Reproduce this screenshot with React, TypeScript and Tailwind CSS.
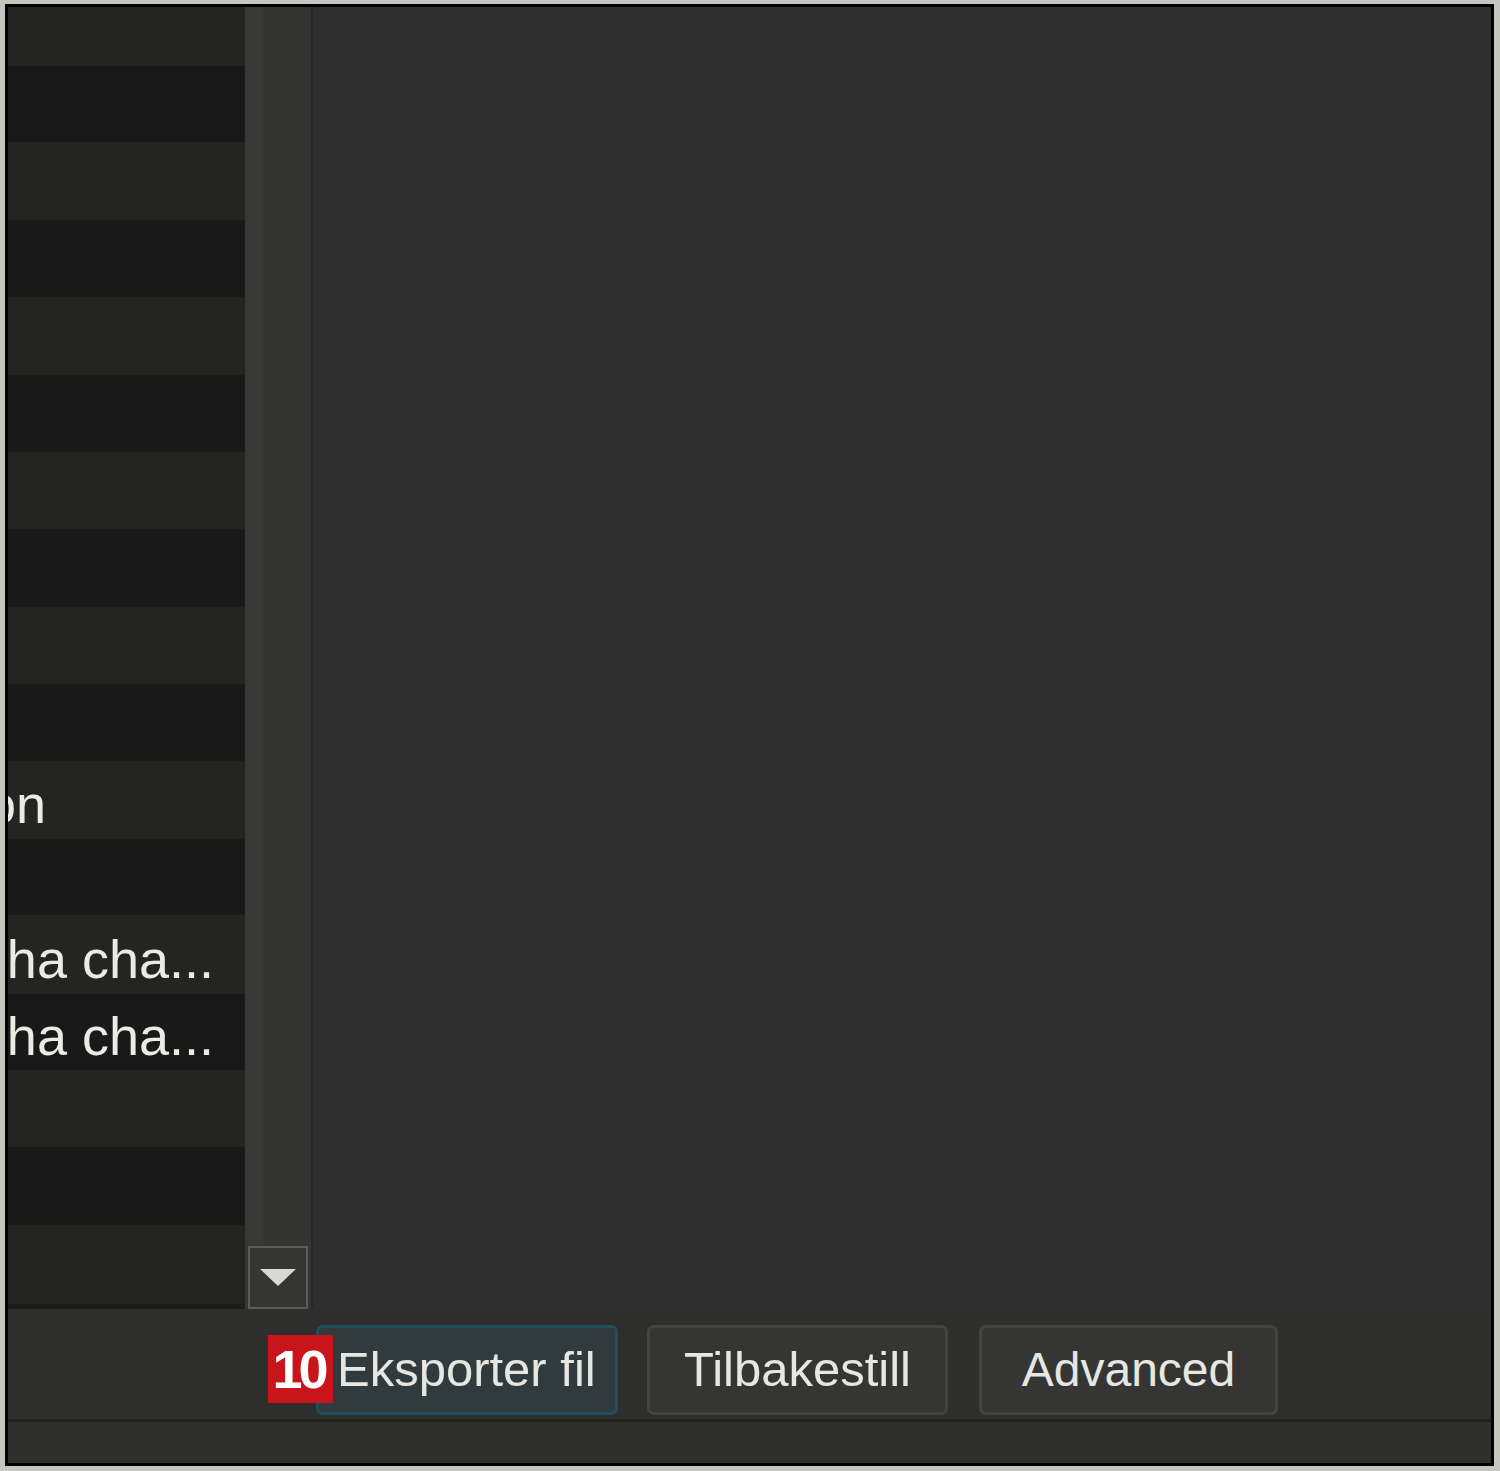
import React from "react";

const rows: { h: string; dark: boolean; text?: string }[] = [
  { h: "h-[59px]", dark: false },
  { h: "h-[76px]", dark: true },
  { h: "h-[78px]", dark: false },
  { h: "h-[77px]", dark: true },
  { h: "h-[78px]", dark: false },
  { h: "h-[77px]", dark: true },
  { h: "h-[77px]", dark: false },
  { h: "h-[78px]", dark: true },
  { h: "h-[77px]", dark: false },
  { h: "h-[77px]", dark: true },
  { h: "h-[78px]", dark: false, text: "Navigation" },
  { h: "h-[76px]", dark: true },
  { h: "h-[79px]", dark: false, text: "Cha cha cha..." },
  { h: "h-[76px]", dark: true, text: "Cha cha cha..." },
  { h: "h-[77px]", dark: false },
  { h: "h-[78px]", dark: true },
  { h: "h-[79px]", dark: false },
];

const font = { fontFamily: '"Liberation Sans", Arial, sans-serif' };

export default function App() {
  return (
    <div className="w-[1500px] h-[1471px] bg-[#c6c6be] pt-[4px] pl-[5px] pr-[6px] pb-[5px]" style={font}>
      <div className="w-full h-full border-[3px] border-black flex flex-col bg-[#2e2f2d]">
        {/* top area */}
        <div className="flex h-[1302px]">
          {/* list */}
          <div className="w-[237px] flex flex-col overflow-hidden border-b-[5px] border-[#1c1d1b]">
            {rows.map((r, i) => (
              <div
                key={i}
                className={`${r.h} shrink-0 flex items-center pt-[8px] ${r.dark ? "bg-[#181918]" : "bg-[#242523]"}`}
              >
                {r.text === "Navigation" && (
                  <div className="w-[38px] flex justify-end overflow-hidden">
                    <span className="whitespace-nowrap text-[54px] leading-none text-[#ebebe6]">Navigation</span>
                  </div>
                )}
                {r.text && r.text !== "Navigation" && (
                  <div className="w-[206px] flex justify-end overflow-hidden">
                    <span className="whitespace-nowrap text-[54px] leading-none text-[#ebebe6]">Cha cha cha...</span>
                  </div>
                )}
              </div>
            ))}
          </div>
          {/* scrollbar */}
          <div className="w-[68px] flex flex-col bg-[#343533] border-r-[2px] border-[#272826]">
            <div className="flex-1 flex">
              <div className="w-[18px] bg-[#383937]" />
              <div className="flex-1" />
            </div>
            <div className="h-[63px] mx-[3px] border-2 border-[#5b5c5a] bg-[#353634] flex items-center justify-center">
              <svg width="36" height="18" viewBox="0 0 36 18">
                <polygon points="0,0 36,0 18,17" fill="#d8d8d6" />
              </svg>
            </div>
          </div>
          {/* right panel */}
          <div className="flex-1 bg-[#2e2f2e]" />
        </div>

        {/* bottom bar */}
        <div className="h-[110px] flex items-start pt-[16px] pl-[308px]">
          <div className="relative">
            <div className="absolute left-[-48px] top-[10px] w-[65px] h-[68px] bg-[#c8141a] flex items-center justify-center z-10">
              <span className="text-[54px] font-bold leading-none text-white tracking-[-4px] pr-[4px]">10</span>
            </div>
            <button className="w-[302px] h-[90px] rounded-[7px] border-[3px] border-[#1e4f5d] bg-[#313a3c] flex items-center justify-start pl-[18px] text-[49px] text-[#e6e6e2]">
              Eksporter fil
            </button>
          </div>
          <button className="ml-[29px] w-[301px] h-[90px] rounded-[7px] border-[3px] border-[#434442] bg-[#353634] flex items-center justify-center text-[49px] text-[#e6e6e2]">
            Tilbakestill
          </button>
          <button className="ml-[31px] w-[299px] h-[90px] rounded-[7px] border-[3px] border-[#434442] bg-[#353634] flex items-center justify-center text-[48px] text-[#e6e6e2]">
            Advanced
          </button>
        </div>
        <div className="h-[3px] bg-[#222321]" />
        <div className="flex-1 bg-[#2e2f2d]" />
      </div>
    </div>
  );
}
